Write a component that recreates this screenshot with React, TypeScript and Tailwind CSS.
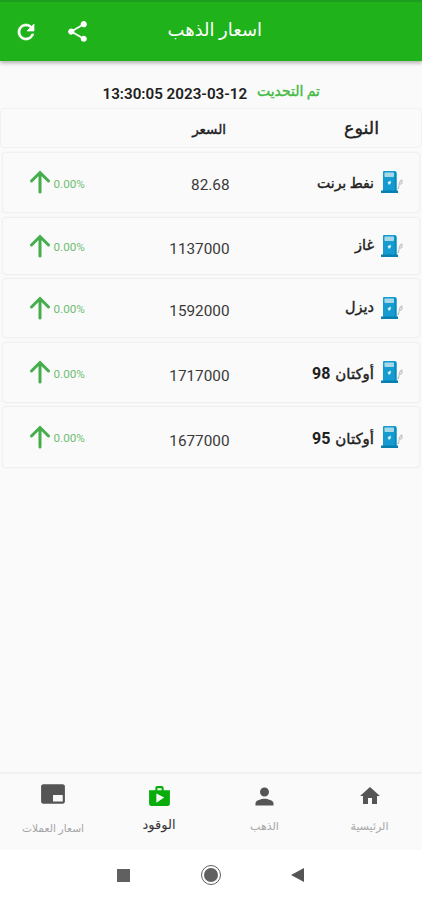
import React from "react";
import { MdBrandingWatermark, MdHome, MdPerson, MdShare, MdShop } from "react-icons/md";

const rows = [
  { name: "نفط برنت", grade: "", price: "82.68", box: "h-[61px] mt-1", label: "pt-0.5 text-[14px]", figure: "mt-[6px]" },
  { name: "غاز", grade: "", price: "1137000", box: "h-[58px] mt-1", label: "text-[14.5px]", figure: "mt-[7px]" },
  { name: "ديزل", grade: "", price: "1592000", box: "h-[60px] mt-[3px]", label: "text-[14.5px]", figure: "mt-[7px]" },
  { name: "أوكتان", grade: "98", price: "1717000", box: "h-[61px] mt-1", label: "pt-0.5 text-[15px]", figure: "mt-[7px]" },
  { name: "أوكتان", grade: "95", price: "1677000", box: "h-[62px] mt-[3px]", label: "pt-1 text-[15px]", figure: "mt-[8px]" },
];

function FuelPump() {
  return (
    <svg className="block h-6 w-6" viewBox="0 0 24 24" fill="none">
      <path d="M17 18.500h1.500l1-6 2.500-3M20 14.500l2-1.500v-2.500" stroke="#c3c6c8" strokeWidth="1.200" />
      <path d="M3 2q0-1 1-1h11q1.500 0 1.500 1.500V21H3Z" fill="#159bd0" />
      <path d="M14.500 1.500 16.500 3V21h-2Z" fill="#0b8cc0" />
      <rect x="4.500" y="2.500" width="9.500" height="4.500" rx=".7" fill="#a8d8e8" />
      <path d="m10.500 10.500-3 2 1.500 2.500 2-2Z" fill="#d5f2fa" />
      <path d="M1 20.500h17V23H1Z" fill="#087fae" />
    </svg>
  );
}

function UpArrow() {
  return (
    <svg className="block h-6 w-6" viewBox="0 0 24 24" fill="none" stroke="#45ad4b" strokeWidth="3" strokeLinecap="round">
      <path d="M12 22V3M3.500 11 12 2.500 20.500 11" />
    </svg>
  );
}

function Refresh() {
  return (
    <svg className="ml-[14px] mt-[18px] h-6 w-6" viewBox="0 0 24 24" fill="currentColor" stroke="currentColor" strokeWidth="0.700">
      <path d="M17.650 6.350A7.958 7.958 0 0 0 12 4c-4.420 0-7.990 3.580-7.990 8s3.570 8 7.990 8c3.730 0 6.840-2.550 7.730-6h-2.080A5.990 5.990 0 0 1 12 18c-3.310 0-6-2.690-6-6s2.690-6 6-6c1.660 0 3.140.69 4.220 1.780L13 11h7V4z" />
    </svg>
  );
}

export default function App() {
  return (
    <div className="flex h-[900px] w-[422px] flex-col overflow-hidden bg-[#fafafa] font-['Roboto','DejaVu_Sans',sans-serif] text-[#202020]">
      <header className="z-10 flex h-[61px] shrink-0 border-t-2 border-[#1d9e20] bg-[#1fb21a] text-white shadow-[0_2px_4px_rgba(0,0,0,0.3)]">
        <Refresh />
        <MdShare className="ml-[27px] mt-[17px] h-[25px] w-[25px]" />
        <h1 dir="rtl" className="ml-[77px] mt-[14px] w-[95px] whitespace-nowrap text-[18px] leading-7">اسعار الذهب</h1>
      </header>

      <div className="flex h-[47px] shrink-0 items-end pb-[4px] pl-[102.500px]">
        <span className="w-[145.500px] whitespace-nowrap text-[15.200px] font-semibold leading-5">13:30:05 2023-03-12</span>
        <span dir="rtl" className="mb-[3px] ml-2 w-[64px] whitespace-nowrap text-[14px] leading-5 text-[#43bb42] [-webkit-text-stroke:0.4px]">تم التحديت</span>
      </div>

      <main>
        <div className="flex h-10 items-center justify-end rounded border border-[#f1f1f1] [-webkit-text-stroke:0.4px]">
          <span dir="rtl" className="w-[60px] whitespace-nowrap pt-0.5 text-[13.500px]">السعر</span>
          <span dir="rtl" className="ml-[93px] mr-[42px] w-[60px] whitespace-nowrap text-[17.500px]">النوع</span>
        </div>
        {rows.map((row) => (
          <div key={row.price} className={`mx-[2px] flex items-center rounded border border-[#f0f0f0] shadow-[0_0_2px_#eeeeee] ${row.box}`}>
            <div className="-mt-px ml-[25px]"><UpArrow /></div>
            <span className="ml-[1.500px] mt-[4px] w-8 whitespace-nowrap text-[11.700px] text-[#70bd74]">0.00%</span>
            <span className={`ml-[64px] w-20 text-right text-[15.300px] text-[#393939] ${row.figure}`}>{row.price}</span>
            <span dir="rtl" className={`ml-[44.500px] w-[100px] whitespace-nowrap [-webkit-text-stroke:0.4px] ${row.label}`}>
              {row.name}
              {row.grade && <span className="ms-[5px] text-[16px] font-bold [-webkit-text-stroke:0px]">{row.grade}</span>}
            </span>
            <div className="-mt-px ml-[6px]"><FuelPump /></div>
          </div>
        ))}
      </main>

      <nav className="mt-auto flex h-[78px] shrink-0 border-t-2 border-[#f1f1f1] text-[#555555]">
        <div className="flex w-[106px] flex-col items-center pt-[7px]">
          <MdBrandingWatermark className="h-[26px] w-[26px]" />
          <span dir="rtl" className="mt-3 whitespace-nowrap text-[10.700px] leading-5 text-[#a6a6a6]">اسعار العملات</span>
        </div>
        <div className="flex w-[106px] flex-col items-center pt-[10px]">
          <MdShop className="h-[25px] w-[25px] text-[#08ad0c]" />
          <span dir="rtl" className="mt-[6px] whitespace-nowrap text-[13px] leading-5 text-[#333333]">الوقود</span>
        </div>
        <div className="flex w-[105px] flex-col items-center pt-[9px]">
          <MdPerson className="h-[27px] w-[27px]" />
          <span dir="rtl" className="mt-[7px] whitespace-nowrap text-[11px] leading-5 text-[#a6a6a6]">الذهب</span>
        </div>
        <div className="flex w-[105px] flex-col items-center pt-[10px]">
          <MdHome className="h-6 w-6" />
          <span dir="rtl" className="mt-[9px] whitespace-nowrap text-[11px] leading-5 text-[#a6a6a6]">الرئيسية</span>
        </div>
      </nav>

      <footer className="flex h-[50px] shrink-0 items-center bg-white text-[#555555]">
        <div className="ml-[117px] h-[13px] w-[13px] bg-[#606060]" />
        <div className="ml-[71px] flex h-5 w-5 items-center justify-center rounded-full border border-[#606060]">
          <div className="h-[14px] w-[14px] rounded-full bg-[#606060]" />
        </div>
        <svg className="ml-[70px] h-[14px] w-[13px]" viewBox="0 0 13 14"><path d="M0 7 13 0v14Z" fill="currentColor" /></svg>
      </footer>
    </div>
  );
}
